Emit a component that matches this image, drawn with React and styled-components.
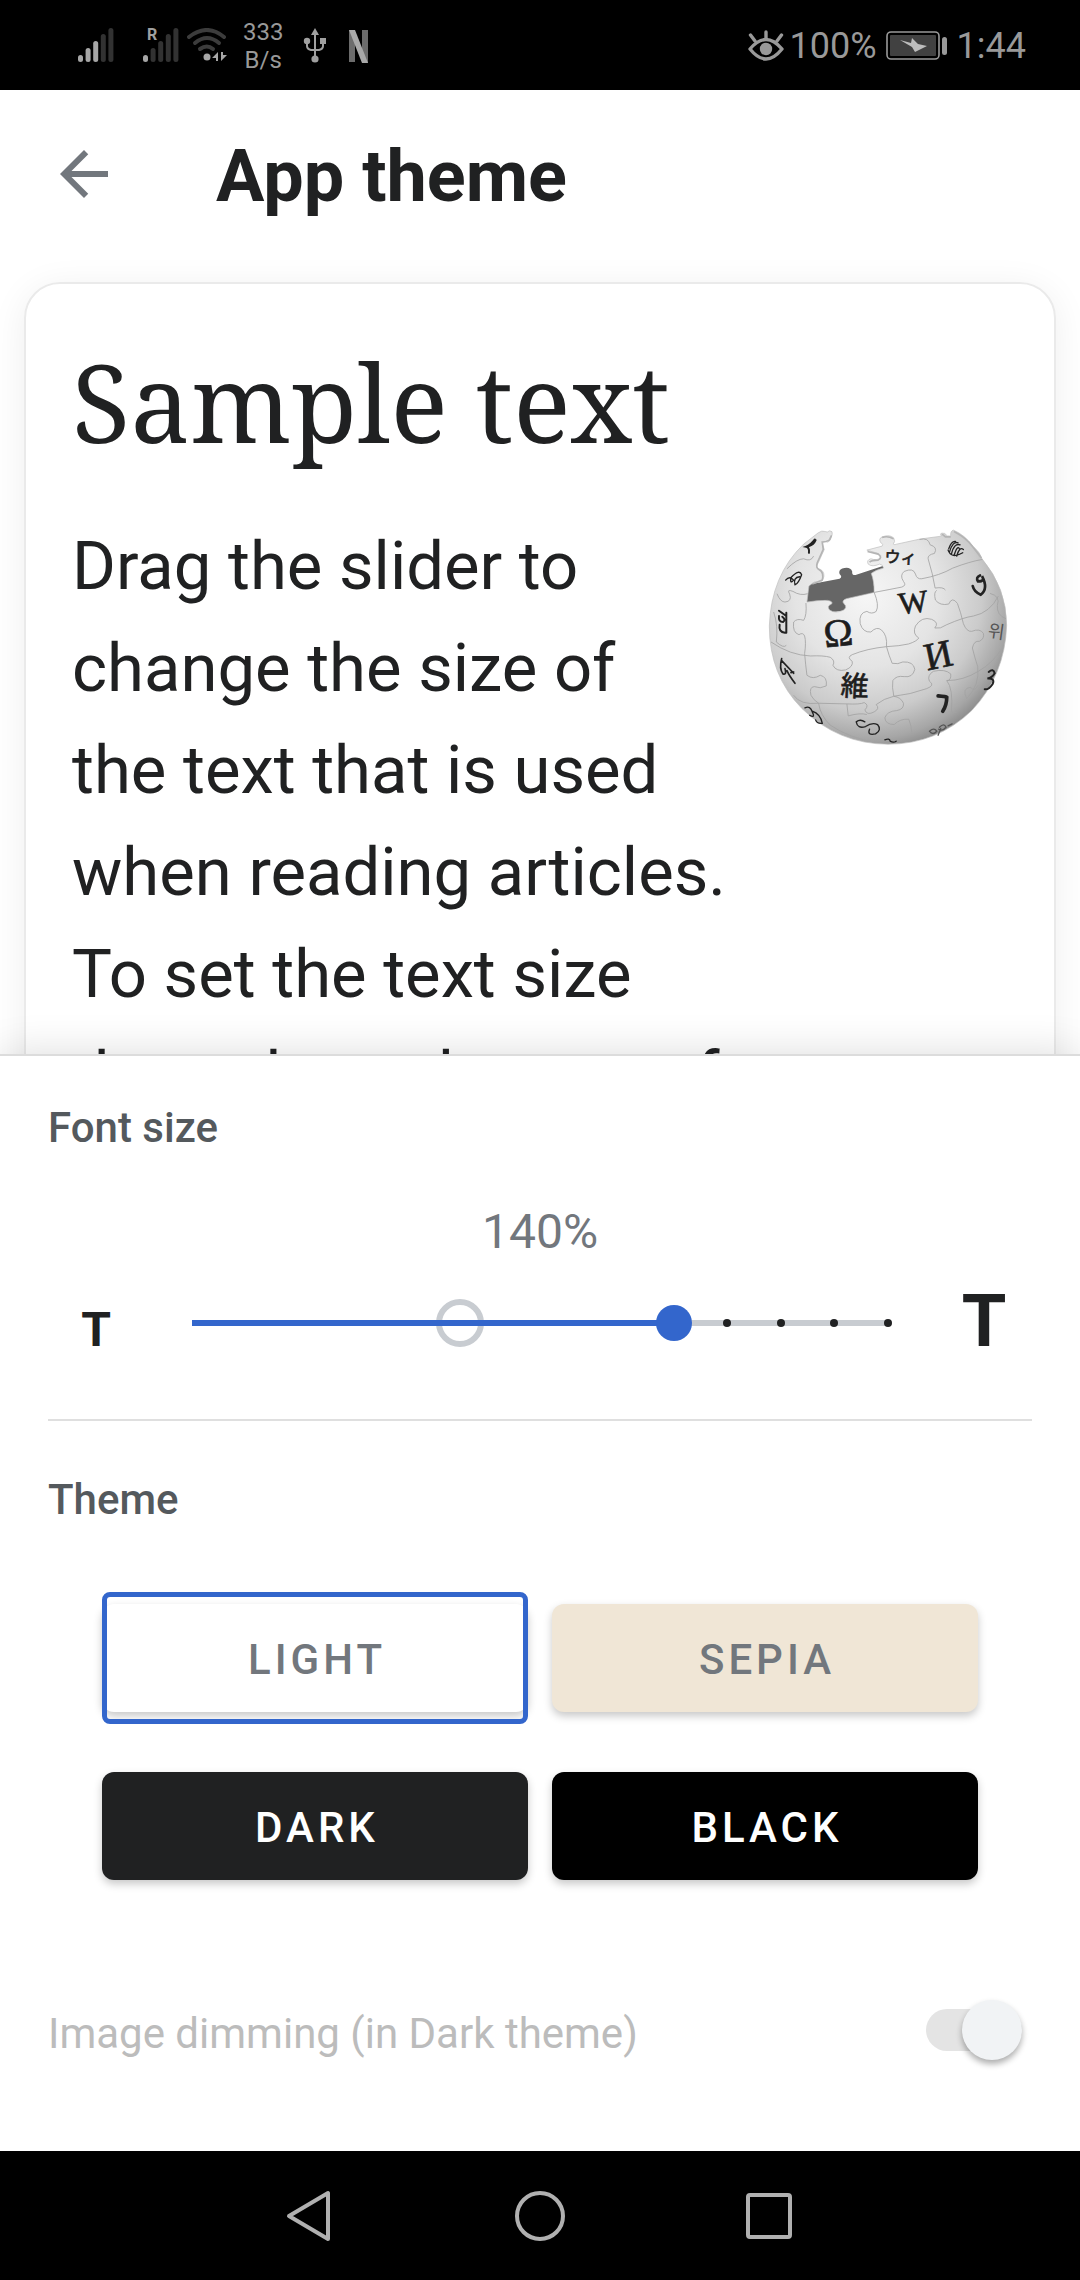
import React, { useState } from "react";
import styled, { createGlobalStyle } from "styled-components";

const GlobalStyle = createGlobalStyle`
  *, *::before, *::after { box-sizing: border-box; }
  body { margin: 0; background: #fff; font-family: Roboto, "Liberation Sans", sans-serif; }
  h1, h2, p { margin: 0; }
  button { font: inherit; border: 0; padding: 0; background: none; cursor: pointer; }
`;

const Screen = styled.div`
  display: flex;
  flex-direction: column;
  height: 100vh;
  overflow: hidden;
  background: #fff;
  color: #202122;
`;

const StatusBar = styled.div`
  display: flex;
  flex: none;
  align-items: center;
  justify-content: space-between;
  height: 90px;
  padding: 2px 54px 0 71px;
  background: #000;
  color: #999;
`;

const StatusGroup = styled.div`
  display: flex;
  align-items: center;
  gap: ${(p) => p.$gap}px;
`;

const NetworkSpeed = styled.span`
  font-size: 24px;
  line-height: 28px;
  text-align: center;
`;

const StatusText = styled.span`
  font-size: 36px;
  line-height: 42px;
`;

const SignalIcon = styled.svg`
  overflow: visible;
`;

const Header = styled.header`
  display: flex;
  flex: none;
  align-items: center;
  gap: 96px;
  height: 168px;
  padding: 0 48px;
`;

const IconButton = styled.button`
  display: flex;
`;

const Title = styled.h1`
  padding-top: 6px;
  font-size: 72px;
  line-height: 84px;
  font-weight: 700;
`;

const Preview = styled.main`
  flex: 1 1 0;
  min-height: 0;
  overflow: hidden;
  padding: 24px 24px 0;
`;

const Card = styled.article`
  padding: 46px 44px 48px 46px;
  border: 2px solid #eaeaea;
  border-radius: 36px;
  box-shadow: 0 6px 36px rgba(0, 0, 0, 0.07);
`;

const SampleTitle = styled.h2`
  font-family: "Noto Serif", "DejaVu Serif Condensed", "DejaVu Serif", serif;
  font-size: 107px;
  line-height: 144px;
  font-weight: 400;
`;

const SampleBody = styled.div`
  display: flex;
  align-items: flex-start;
  justify-content: space-between;
  margin-top: 41px;
`;

const SampleText = styled.p`
  font-size: 67px;
  line-height: 102px;
  white-space: nowrap;
`;

const GlobeIcon = styled.svg`
  flex: none;
  margin-top: 12px;
`;

const Sheet = styled.section`
  position: relative;
  flex: none;
  padding: 44px 48px 91px;
  border-top: 2px solid #dcdcdc;
  background: #fff;
  box-shadow: 0 0 40px rgba(0, 0, 0, 0.14);
`;

const SectionLabel = styled.h2`
  font-size: 42px;
  line-height: 56px;
  font-weight: 500;
  color: #54595d;
`;

const SizeValue = styled.output`
  display: block;
  margin-top: 48px;
  font-size: 48px;
  line-height: 56px;
  text-align: center;
  color: #72777d;
`;

const SizeRow = styled.div`
  display: flex;
  align-items: baseline;
  gap: 48px;
  height: 90px;
  margin-top: 18px;
`;

const SizeStep = styled.button`
  flex: none;
  width: 96px;
  font-size: ${(p) => p.$size}px;
  line-height: 88px;
  font-weight: 700;
  color: #202122;
`;

const SliderBox = styled.div`
  flex: 1;
  align-self: center;
  display: grid;
  align-items: center;
  > * { grid-area: 1 / 1; }
`;

const Rail = styled.div`
  height: 6px;
  background: ${(p) => p.$color};
`;

const DefaultMark = styled.div`
  position: relative;
  justify-self: start;
  width: 48px;
  height: 48px;
  margin-left: -24px;
  border: 6px solid #c8ccd1;
  border-radius: 50%;
`;

const Ticks = styled.div`
  display: flex;
  justify-content: space-between;
  margin: 0 -4px;
`;

const Tick = styled.span`
  width: 8px;
  height: 8px;
  border-radius: 50%;
  background: ${(p) => (p.$shown ? "#202122" : "transparent")};
`;

const FilledRail = styled(Rail)`
  position: relative;
`;

const Range = styled.input`
  position: relative;
  appearance: none;
  height: 48px;
  width: calc(100% + 36px);
  margin: 0 -18px;
  background: transparent;
  &::-webkit-slider-thumb {
    appearance: none;
    width: 36px;
    height: 36px;
    border-radius: 50%;
    background: #36c;
  }
`;

const Divider = styled.hr`
  height: 2px;
  margin: 51px 0;
  border: 0;
  background: #dfdfdf;
`;

const ThemeGrid = styled.div`
  display: grid;
  grid-template-columns: 1fr 1fr;
  gap: 36px 24px;
  padding: 0 54px;
  margin-top: 64px;
`;

const ThemeButton = styled.button`
  position: relative;
  height: 108px;
  margin: 12px 0;
  padding: 4px 0 0 4px;
  border-radius: 12px;
  background: ${(p) => p.$bg};
  color: ${(p) => p.$fg};
  font-size: 42px;
  line-height: 56px;
  font-weight: 500;
  letter-spacing: 4px;
  text-transform: uppercase;
  box-shadow: 0 4px 8px rgba(0, 0, 0, 0.22);
  &[aria-pressed="true"]::after {
    content: "";
    position: absolute;
    inset: -12px 0;
    border: 5px solid #36c;
    border-radius: 8px;
  }
`;

const SwitchRow = styled.label`
  display: flex;
  align-items: center;
  justify-content: space-between;
  margin-top: 108px;
  padding-right: 10px;
  font-size: 42px;
  line-height: 60px;
  color: #bcbcbc;
`;

const SwitchText = styled.span`
  padding-top: 4px;
  margin-bottom: -4px;
`;

const Switch = styled.input`
  appearance: none;
  display: flex;
  align-items: center;
  justify-content: ${(p) => (p.checked ? "flex-end" : "flex-start")};
  width: 96px;
  height: 42px;
  margin: 0;
  border-radius: 21px;
  background: #e4e4e4;
  &::after {
    content: "";
    width: 60px;
    height: 60px;
    border-radius: 50%;
    background: #f1f3f5;
    box-shadow: 0 4px 6px rgba(0, 0, 0, 0.32);
  }
`;

const NavBar = styled.nav`
  display: flex;
  flex: none;
  align-items: center;
  justify-content: center;
  gap: 180px;
  height: 129px;
  background: #000;
`;

function Signal({ lit, roaming }) {
  return (
    <SignalIcon width="43" height="36" viewBox="-7 0 43 36" aria-hidden="true">
      {[27, 20, 13, 6, 0].map((y, i) => (
        <rect key={y} x={i * 7.6} y={y} width="5" height={34 - y} rx="2.5" fill={i < lit ? "#a6a6a6" : "#323232"} />
      ))}
      {roaming && (
        <text x="4" y="12" fontSize="16" fontWeight="700" fontFamily="Roboto, sans-serif" fill="#a0a0a0">R</text>
      )}
    </SignalIcon>
  );
}

function Wifi() {
  return (
    <svg width="40" height="36" viewBox="0 0 40 36" fill="none" aria-hidden="true">
      <g stroke="#3c3c3c" strokeWidth="4" strokeLinecap="round">
        <path d="M2 9 Q20 -5 37 9" />
        <path d="M8 15 Q20 5 32 15" />
        <path d="M13 21 Q20 16 26 21" />
      </g>
      <circle cx="20" cy="29" r="3.5" fill="#a6a6a6" />
      <path d="M31 24 V33 H29 V30 H25 Z M34 24 V33 L40 27 H36 V24 Z" fill="#a6a6a6" />
    </svg>
  );
}

function Usb() {
  return (
    <svg width="24" height="36" viewBox="0 0 24 36" fill="none" stroke="#a0a0a0" strokeWidth="2" aria-hidden="true">
      <path d="M12 5 V30 M4 14 V18 Q4 21 8 22 L16 22 Q20 21 20 18 V14" />
      <g fill="#a0a0a0" stroke="none">
        <path d="M12 0 L16 7 H8 Z" />
        <circle cx="4" cy="13" r="3.2" />
        <rect x="17" y="10" width="6" height="6" />
        <circle cx="12" cy="31" r="3.6" />
      </g>
    </svg>
  );
}

function NMark() {
  return (
    <svg width="19" height="34" viewBox="0 0 19 34" aria-hidden="true">
      <path d="M0 1 H6 V33 H0 Z M13 1 H19 V34 H13 Z" fill="#6c6c6c" />
      <path d="M0 1 H6 L19 34 H13 Z" fill="#a9a9a9" />
    </svg>
  );
}

function Eye() {
  return (
    <svg width="36" height="34" viewBox="0 0 36 34" fill="none" stroke="#999" strokeWidth="3.4" strokeLinecap="round" aria-hidden="true">
      <path d="M2 20 Q18 1 34 20 Q18 40 2 20 Z" strokeLinejoin="round" />
      <path d="M18 9 V3 M7 12 L2.500 6 M29 12 L33.500 6" />
      <circle cx="18" cy="20" r="6.200" fill="#999" stroke="none" />
    </svg>
  );
}

function Battery() {
  return (
    <svg width="62" height="30" viewBox="0 0 62 30" aria-hidden="true">
      <rect x="1" y="1" width="52" height="27" rx="4" fill="none" stroke="#999" strokeWidth="1.600" />
      <rect x="4" y="4" width="46" height="21" rx="1" fill="#414141" />
      <path d="M14 9 L25 12 L26 7 L32 13 L41 15 L29 21 L26 16 Z" fill="#bdbdbd" />
      <rect x="56" y="6" width="5" height="18" rx="2.500" fill="#999" />
    </svg>
  );
}

function Globe() {
  return (
    <GlobeIcon width="243" height="220" viewBox="50 55 730 660" role="img" aria-label="Wikipedia">
      <defs>
        <radialGradient id="ball" gradientUnits="userSpaceOnUse" cx="350" cy="260" r="480">
          <stop offset="0" stopColor="#f6f6f6" />
          <stop offset="0.450" stopColor="#e4e4e4" />
          <stop offset="0.720" stopColor="#cbcbcb" />
          <stop offset="0.900" stopColor="#a6a6a6" />
          <stop offset="1" stopColor="#868686" />
        </radialGradient>
      </defs>
      <path
        d="M172 228 L268 210 Q278 206 268 196 Q264 184 276 179 Q300 172 306 188 Q304 200 316 199 L398 172 L402 180 L370 198 L372 252 L290 272 L292 305 L232 312 L225 276 L170 282 Z"
        fill="#666"
      />
      <path
        d="M204 72 Q215 64 224 68 Q232 72 238 66 Q248 66 246 76 L240 94 Q234 104 224 98 Q212 98 218 110 L222 122 L204 162 Q194 178 204 180 Q222 184 221 202 Q218 222 204 220 Q192 217 186 224 L176 232 L170 280
           Q205 274 232 275 Q250 278 244 286 Q228 292 238 304 Q256 316 280 304 Q292 296 282 286 Q272 276 288 270 L372 251 Q372 215 363 194 Q376 184 400 178 Q398 166 388 166 Q366 176 354 166 Q348 154 362 150 Q380 156 391 148 Q396 138 384 134 L350 124
           L396 112 Q402 106 392 102 Q384 90 396 84 Q420 76 431 88 Q436 100 430 104 Q428 110 440 106 Q510 88 574 82 Q566 70 584 74 Q590 84 602 82 Q600 66 610 64 Q644 78 668 112 Q690 130 696 150
           Q770 238 770 350 Q765 500 665 606 Q560 707 414 707 Q265 707 155 600 Q57 500 57 352 Q62 200 160 106 Z"
        fill="url(#ball)"
        stroke="#bdbdbd"
        strokeWidth="2"
      />
      <g fill="none" stroke="#b4b4b4" strokeWidth="5">
        <path d="M244 80 L237 94 Q226 100 216 100 L219 122 L201 162 Q196 178 206 182 Q222 190 216 214 Q202 220 186 226 M352 128 L384 136 Q398 146 384 154 Q364 154 358 160 M396 86 Q412 80 430 90 M576 76 L586 84 L602 84 M612 68 Q650 88 668 114 L694 148" />
      </g>
      <g fill="none" stroke="#a2a2a2" strokeWidth="2.500">
        <path d="M372 251 Q420 242 455 235 Q470 230 460 218 Q448 200 462 188 Q490 176 496 196 Q500 212 515 210 Q570 200 608 178 Q660 158 697 152" />
        <path d="M372 251 Q388 290 378 308 Q365 318 350 308 Q325 312 330 345 Q338 372 362 370 Q380 352 394 364 Q412 380 409 414" />
        <path d="M167 283 Q170 320 160 335 Q140 328 130 340 Q126 372 146 378 Q158 370 163 382 Q168 400 163 435" />
        <path d="M62 400 Q120 440 180 442 Q220 440 240 446 Q256 456 248 470 Q258 490 286 484 Q310 474 306 458 Q288 446 306 438 Q350 420 409 414 Q450 412 475 406 Q500 398 506 388 Q486 376 496 352 Q515 322 545 332 Q568 342 554 358 Q570 362 590 348 Q640 326 670 322 Q720 312 745 262" />
        <path d="M508 92 Q535 85 540 108 Q564 115 553 134 Q532 138 534 150 Q548 195 555 238 Q580 234 586 244 M560 245 Q550 250 556 274 Q570 292 596 286 Q606 262 622 284 Q632 310 640 345 Q650 370 665 368 Q690 358 700 374 Q704 390 688 398 Q672 395 667 418 Q675 450 683 474" />
        <path d="M409 414 Q416 440 426 464 Q444 468 458 460 Q490 458 494 482 Q488 508 462 504 Q438 500 428 516 Q425 535 431 563" />
        <path d="M163 435 Q166 470 170 500 Q188 514 210 500 Q232 505 228 532 Q210 542 192 534 Q176 535 182 560 Q190 575 205 584 L290 586 Q330 588 342 582 Q358 590 344 604 Q350 622 372 610 Q390 600 378 588 Q400 570 431 563 Q480 558 530 540 Q556 530 538 518 Q530 500 550 488 Q585 480 602 496 Q604 516 590 516 Q640 516 685 488 Q730 462 755 420" />
        <path d="M431 563 Q452 566 460 584 Q462 602 440 606 Q410 608 404 628 Q406 648 432 648 Q450 630 476 632 Q484 650 486 680 M290 586 L294 622 Q330 612 350 618 M683 474 Q690 530 650 570 Q635 540 660 536 Q676 550 684 530 M590 516 Q610 540 604 610 L620 612" />
        <path d="M80 255 Q90 280 104 280 Q126 278 118 256 Q108 240 128 248 Q150 262 172 255 M110 180 Q140 150 160 150 Q182 160 190 142 M70 310 Q84 350 78 400 Q100 420 108 410 M205 584 Q210 620 240 650 Q300 690 380 702 M130 560 Q150 590 205 584" />
        <path d="M720 254 Q752 262 742 290 Q740 320 768 330" />
      </g>
      <g fill="#1d1d1d" stroke="#1d1d1d" strokeWidth="2" fontFamily='"Liberation Serif", "DejaVu Serif", serif' textAnchor="middle">
        <text transform="translate(268 412) rotate(-6)" fontSize="118">Ω</text>
        <text transform="translate(493 312) rotate(-7)" fontSize="94">W</text>
        <text transform="translate(572 477) rotate(-12)" fontSize="116">И</text>
        <text transform="translate(312 562) rotate(3)" fontSize="84" fontFamily='"Noto Sans CJK JP", sans-serif'>維</text>
        <text transform="translate(450 163) rotate(3)" fontSize="48" fontFamily='"Noto Sans CJK JP", sans-serif'>ウィ</text>
        <text transform="translate(736 388) rotate(8)" fontSize="54" fontFamily='"Noto Sans CJK KR", sans-serif' fill="#555" stroke="none">위</text>
      </g>
      <g fill="none" stroke="#222" strokeWidth="6" strokeLinecap="round">
        <path d="M564 562 Q588 564 590 566 Q590 590 578 608" strokeWidth="11" />
        <path d="M690 200 Q676 206 684 218 Q706 218 696 202 Q716 240 692 258 Q672 250 668 232" strokeWidth="8" />
        <path d="M596 120 Q604 96 616 98 M598 130 Q608 96 624 102 M604 136 Q612 102 630 108 M612 140 Q622 108 628 120 M620 142 Q628 112 640 122 M594 124 Q604 152 638 132" strokeWidth="4" />
        <path d="M194 92 Q180 110 168 114 Q178 116 176 132 M176 112 Q190 108 196 94" />
        <path d="M106 214 Q118 200 130 214 Q118 228 122 206 Q148 180 154 198 Q144 226 134 228 Q128 206 148 204" strokeWidth="4" />
        <path d="M86 306 L108 322 M86 322 Q84 340 98 340 Q108 334 96 324 M108 312 V372 M88 348 Q84 370 104 372" />
        <path d="M94 450 Q86 480 98 496 Q110 500 104 480 M94 456 L130 494 M110 486 Q116 500 134 524 M122 492 L130 490" strokeWidth="5" />
        <path d="M164 598 Q180 590 186 610 Q196 630 178 620 M186 608 Q210 616 216 644 Q200 646 196 634" strokeWidth="4" />
        <path d="M318 640 Q322 662 346 654 Q366 640 382 648 Q396 664 376 676 Q350 682 358 662 M318 640 Q330 630 344 640" strokeWidth="4" />
        <path d="M716 490 Q730 478 734 494 Q726 508 712 510 Q736 508 728 526 Q716 544 704 542" />
        <path d="M538 668 Q552 656 560 668 Q548 682 538 668 M568 656 Q582 642 588 656 Q576 670 566 662 M572 660 L564 680 M594 652 L606 646" strokeWidth="4" stroke="#555" />
        <path d="M404 694 Q418 688 420 698 Q430 704 438 698" strokeWidth="4" />
      </g>
    </GlobeIcon>
  );
}

const MIN = 50;
const MAX = 180;
const STEP = 10;
const DEFAULT = 100;
const STOPS = Array.from({ length: (MAX - MIN) / STEP + 1 }, (_, i) => MIN + i * STEP);
const toPercent = (v) => ((v - MIN) / (MAX - MIN)) * 100 + "%";

const THEMES = [
  { name: "Light", bg: "#fff", fg: "#72777d" },
  { name: "Sepia", bg: "#f0e6d6", fg: "#72777d" },
  { name: "Dark", bg: "#202122", fg: "#fff" },
  { name: "Black", bg: "#000", fg: "#fff" },
];

export default function App() {
  const [size, setSize] = useState(140);
  const [theme, setTheme] = useState("Light");
  const change = (v) => setSize(Math.min(MAX, Math.max(MIN, v)));

  return (
    <Screen>
      <GlobalStyle />
      <StatusBar>
        <StatusGroup $gap={20}>
          <StatusGroup $gap={16}>
            <StatusGroup $gap={8}>
              <StatusGroup $gap={22}>
                <Signal lit={3} />
                <Signal lit={1} roaming />
              </StatusGroup>
              <Wifi />
            </StatusGroup>
            <NetworkSpeed>333<br />B/s</NetworkSpeed>
          </StatusGroup>
          <StatusGroup $gap={22}>
            <Usb />
            <NMark />
          </StatusGroup>
        </StatusGroup>
        <StatusGroup $gap={9}>
          <StatusGroup $gap={6}>
            <Eye />
            <StatusText>100%</StatusText>
          </StatusGroup>
          <Battery />
          <StatusText>1:44</StatusText>
        </StatusGroup>
      </StatusBar>

      <Header>
        <IconButton type="button" aria-label="Navigate up">
          <svg width="72" height="72" viewBox="0 0 24 24" fill="#72777d" aria-hidden="true">
            <path d="M20 11H7.830l5.590-5.590L12 4l-8 8 8 8 1.410-1.410L7.830 13H20v-2z" />
          </svg>
        </IconButton>
        <Title>App theme</Title>
      </Header>

      <Preview>
        <Card>
          <SampleTitle>Sample text</SampleTitle>
          <SampleBody>
            <SampleText>
              Drag the slider to<br />
              change the size of<br />
              the text that is used<br />
              when reading articles.<br />
              To set the text size<br />
              throughout the rest of
            </SampleText>
            <Globe />
          </SampleBody>
        </Card>
      </Preview>

      <Sheet>
        <SectionLabel as="label" htmlFor="font-size">Font size</SectionLabel>
        <SizeValue htmlFor="font-size">{size}%</SizeValue>
        <SizeRow>
          <SizeStep type="button" $size={48} aria-label="Decrease text size" onClick={() => change(size - STEP)}>T</SizeStep>
          <SliderBox>
            <Rail $color="#c8ccd1" />
            <DefaultMark style={{ left: toPercent(DEFAULT) }} />
            <FilledRail $color="#36c" style={{ width: toPercent(size) }} />
            <Ticks>
              {STOPS.map((v) => <Tick key={v} $shown={v > size} />)}
            </Ticks>
            <Range
              id="font-size"
              type="range"
              min={MIN}
              max={MAX}
              step={STEP}
              value={size}
              onChange={(e) => change(Number(e.target.value))}
            />
          </SliderBox>
          <SizeStep type="button" $size={72} aria-label="Increase text size" onClick={() => change(size + STEP)}>T</SizeStep>
        </SizeRow>
        <Divider />
        <SectionLabel>Theme</SectionLabel>
        <ThemeGrid>
          {THEMES.map((t) => (
            <ThemeButton key={t.name} type="button" $bg={t.bg} $fg={t.fg} aria-pressed={theme === t.name} onClick={() => setTheme(t.name)}>
              {t.name}
            </ThemeButton>
          ))}
        </ThemeGrid>
        <SwitchRow>
          <SwitchText>Image dimming (in Dark theme)</SwitchText>
          <Switch type="checkbox" role="switch" checked disabled readOnly />
        </SwitchRow>
      </Sheet>

      <NavBar>
        <IconButton type="button" aria-label="Back">
          <svg width="50" height="54" viewBox="0 0 50 54" fill="none" stroke="#b0b0b0" strokeWidth="4" strokeLinejoin="round" aria-hidden="true">
            <path d="M43 4 V50 L4 27 Z" />
          </svg>
        </IconButton>
        <IconButton type="button" aria-label="Home">
          <svg width="50" height="50" viewBox="0 0 50 50" fill="none" stroke="#b0b0b0" strokeWidth="4" aria-hidden="true">
            <circle cx="25" cy="25" r="23" />
          </svg>
        </IconButton>
        <IconButton type="button" aria-label="Recent apps">
          <svg width="50" height="50" viewBox="0 0 50 50" fill="none" stroke="#b0b0b0" strokeWidth="4" aria-hidden="true">
            <rect x="3" y="4" width="42" height="42" rx="2" />
          </svg>
        </IconButton>
      </NavBar>
    </Screen>
  );
}
